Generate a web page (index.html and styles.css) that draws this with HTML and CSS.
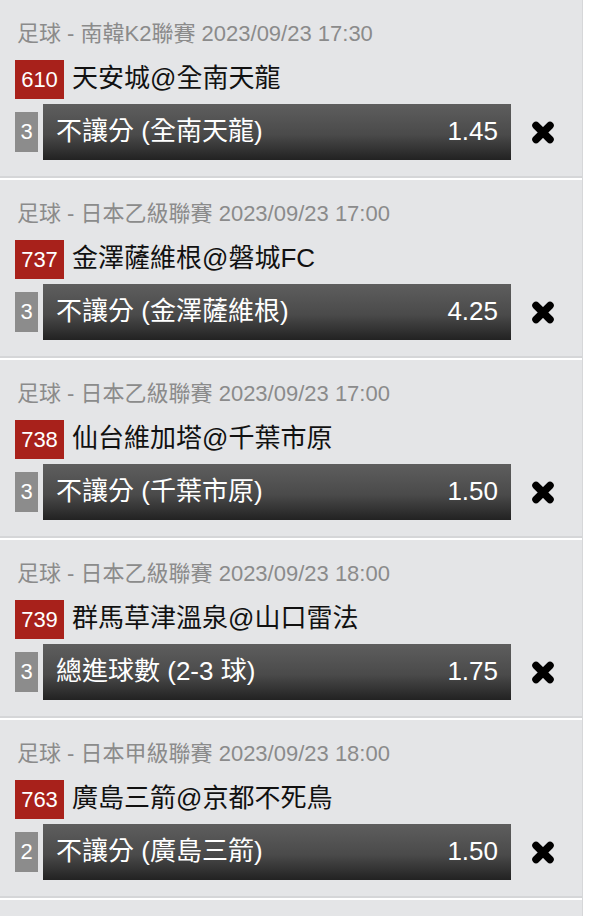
FILE: index.html
```html
<!DOCTYPE html>
<html>
<head>
    <title>Bet Slip</title>
    <meta charset="utf-8">
    <meta name="viewport" content="width=device-width, initial-scale=1.0">
    <link rel="stylesheet" href="styles.css">
</head>
<body>
    <div id="slip">
        <div class="bet">
            <div class="bet-league">足球 - 南韓K2聯賽 2023/09/23 17:30</div>
            <div class="bet-match">
                <span class="match-no">610</span>
                <span class="match-teams">天安城@全南天龍</span>
            </div>
            <div class="bet-pick">
                <span class="pick-type">3</span>
                <div class="pick-bar">
                    <span class="pick-name">不讓分 (全南天龍)</span>
                    <span class="pick-odds">1.45</span>
                </div>
                <svg class="pick-remove" viewBox="0 0 24 25"><path d="M5 5.5 L19 19.5 M19 5.5 L5 19.5"/></svg>
            </div>
        </div>
        <div class="bet">
            <div class="bet-league">足球 - 日本乙級聯賽 2023/09/23 17:00</div>
            <div class="bet-match">
                <span class="match-no">737</span>
                <span class="match-teams">金澤薩維根@磐城FC</span>
            </div>
            <div class="bet-pick">
                <span class="pick-type">3</span>
                <div class="pick-bar">
                    <span class="pick-name">不讓分 (金澤薩維根)</span>
                    <span class="pick-odds">4.25</span>
                </div>
                <svg class="pick-remove" viewBox="0 0 24 25"><path d="M5 5.5 L19 19.5 M19 5.5 L5 19.5"/></svg>
            </div>
        </div>
        <div class="bet">
            <div class="bet-league">足球 - 日本乙級聯賽 2023/09/23 17:00</div>
            <div class="bet-match">
                <span class="match-no">738</span>
                <span class="match-teams">仙台維加塔@千葉市原</span>
            </div>
            <div class="bet-pick">
                <span class="pick-type">3</span>
                <div class="pick-bar">
                    <span class="pick-name">不讓分 (千葉市原)</span>
                    <span class="pick-odds">1.50</span>
                </div>
                <svg class="pick-remove" viewBox="0 0 24 25"><path d="M5 5.5 L19 19.5 M19 5.5 L5 19.5"/></svg>
            </div>
        </div>
        <div class="bet">
            <div class="bet-league">足球 - 日本乙級聯賽 2023/09/23 18:00</div>
            <div class="bet-match">
                <span class="match-no">739</span>
                <span class="match-teams">群馬草津溫泉@山口雷法</span>
            </div>
            <div class="bet-pick">
                <span class="pick-type">3</span>
                <div class="pick-bar">
                    <span class="pick-name">總進球數 (2-3 球)</span>
                    <span class="pick-odds">1.75</span>
                </div>
                <svg class="pick-remove" viewBox="0 0 24 25"><path d="M5 5.5 L19 19.5 M19 5.5 L5 19.5"/></svg>
            </div>
        </div>
        <div class="bet">
            <div class="bet-league">足球 - 日本甲級聯賽 2023/09/23 18:00</div>
            <div class="bet-match">
                <span class="match-no">763</span>
                <span class="match-teams">廣島三箭@京都不死鳥</span>
            </div>
            <div class="bet-pick">
                <span class="pick-type">2</span>
                <div class="pick-bar">
                    <span class="pick-name">不讓分 (廣島三箭)</span>
                    <span class="pick-odds">1.50</span>
                </div>
                <svg class="pick-remove" viewBox="0 0 24 25"><path d="M5 5.5 L19 19.5 M19 5.5 L5 19.5"/></svg>
            </div>
        </div>
        <div class="bet"></div>
    </div>
</body>
</html>
```

FILE: styles.css
```css
html, body {
    margin: 0;
    padding: 0;
    background: #fff;
    overflow: hidden;
    font-family: "Liberation Sans", "Noto Sans CJK TC", sans-serif;
}

#slip {
    width: 582px;
    border-right: 1px solid #d6d7d9;
}

.bet {
    box-sizing: border-box;
    height: 178px;
    margin-bottom: 2px;
    padding: 21px 0 0 15px;
    background: #e4e5e7;
    border-bottom: 2px solid #d5d6d8;
}

.bet-league {
    height: 26px;
    line-height: 26px;
    font-size: 22px;
    color: #8b8b8b;
    padding-left: 2px;
}

.bet-match {
    display: flex;
    align-items: center;
    margin-top: 13px;
    height: 39px;
}

.match-no {
    width: 49px;
    height: 39px;
    line-height: 39px;
    text-align: center;
    background: #a8211b;
    color: #fff;
    font-size: 22px;
}

.match-teams {
    margin-left: 8px;
    font-size: 26px;
    line-height: 1;
    margin-top: -3px;
    color: #111;
}

.bet-pick {
    display: flex;
    align-items: center;
    margin-top: 5px;
    height: 56px;
}

.pick-type {
    width: 23px;
    height: 40px;
    line-height: 40px;
    text-align: center;
    background: #8c8c8c;
    color: #fff;
    font-size: 22px;
}

.pick-bar {
    box-sizing: border-box;
    display: flex;
    align-items: center;
    justify-content: space-between;
    width: 468px;
    height: 56px;
    margin-left: 5px;
    padding: 0 13px 3px;
    background: linear-gradient(to bottom, #5e5e5e 0%, #4a4a4a 55%, #222 100%);
    color: #fff;
    font-size: 26px;
    line-height: 1;
}

.pick-remove {
    width: 24px;
    height: 25px;
    margin-left: 20px;
    fill: none;
    stroke: #000;
    stroke-width: 7.5;
    stroke-linecap: round;
}
```
